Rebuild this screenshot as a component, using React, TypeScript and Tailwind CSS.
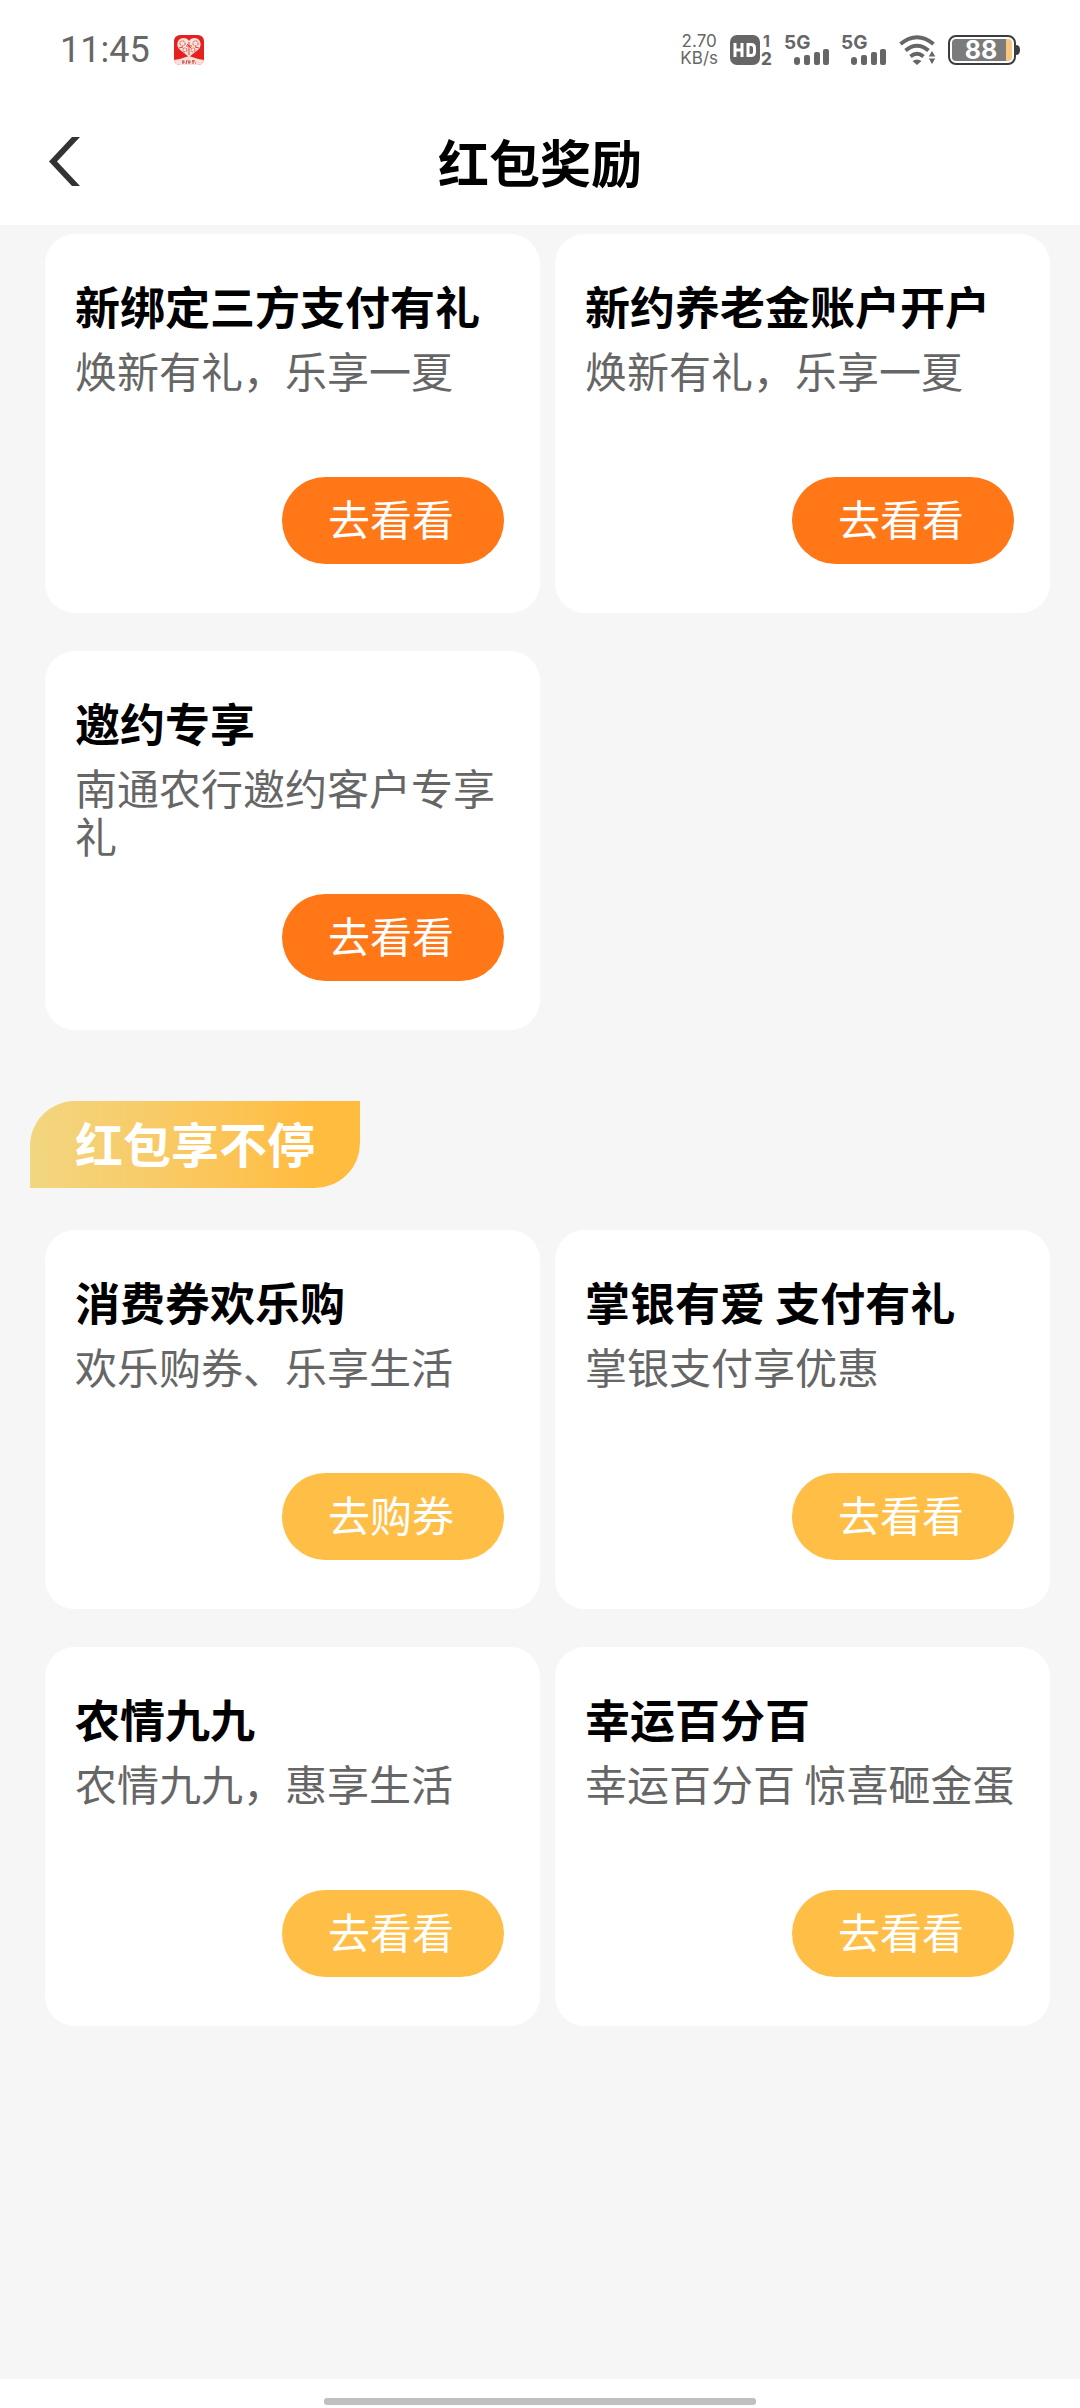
import React from "react";

type Reward = {
  title: string;
  description: string;
  action: string;
};

const newUserRewards: Reward[] = [
  { title: "新绑定三方支付有礼", description: "焕新有礼，乐享一夏", action: "去看看" },
  { title: "新约养老金账户开户", description: "焕新有礼，乐享一夏", action: "去看看" },
  { title: "邀约专享", description: "南通农行邀约客户专享礼", action: "去看看" },
];

const moreRewards: Reward[] = [
  { title: "消费券欢乐购", description: "欢乐购券、乐享生活", action: "去购券" },
  { title: "掌银有爱 支付有礼", description: "掌银支付享优惠", action: "去看看" },
  { title: "农情九九", description: "农情九九，惠享生活", action: "去看看" },
  { title: "幸运百分百", description: "幸运百分百 惊喜砸金蛋", action: "去看看" },
];

const AppBadge = () => (
  <svg width="30" height="30" viewBox="0 0 30 30" aria-hidden="true">
    <defs>
      <clipPath id="badge">
        <rect width="30" height="30" rx="6" />
      </clipPath>
    </defs>
    <g clipPath="url(#badge)">
      <rect width="30" height="30" fill="#e5211f" />
      <path d="M0 25 Q7 24 15 21 Q23 24 30 25 V30 H0 Z" fill="#f9dfd8" />
      <path
        d="M15 22 L5 14 C2 10 3 4 9 3 C12 3 14 4 15 6 C16 4 18 3 21 3 C27 4 28 10 25 14 Z"
        fill="#fbe3dc"
      />
      <g fill="none" stroke="#d8423a" strokeWidth="1">
        <circle cx="8.500" cy="8.500" r="2.600" strokeDasharray="2 1" />
        <circle cx="21.500" cy="8.500" r="2.600" strokeDasharray="2 1" />
        <circle cx="11" cy="15" r="2" strokeDasharray="2 1" />
        <circle cx="19" cy="15" r="2" strokeDasharray="2 1" />
        <path d="M15 7 V20 M12 11 H18 M13 9 L17 13 M5 13 L9 12 M25 13 L21 12" />
      </g>
      <path
        d="M9 25 V29 M8 27 H11 M13 25 L12 29 M15 25 V29 M14 27 H17 M19 25 V29 M18 26 H21 M21 28 H22"
        stroke="#c9463c"
        strokeWidth="1"
        fill="none"
      />
    </g>
  </svg>
);

const HdIcon = () => (
  <svg width="43" height="30" viewBox="0 0 43 30" className="overflow-visible" aria-label="HD">
    <rect width="30" height="30" rx="7" fill="#666" />
    <path
      d="M5 8 V22 M12 8 V22 M5 15 H12 M18 9.500 H21 Q24.500 9.500 24.500 13 V17 Q24.500 20.500 21 20.500 H18 Z"
      fill="none"
      stroke="#fff"
      strokeWidth="3"
    />
    <text x="33" y="12" fontSize="16" fontWeight="700" fill="#666">
      1
    </text>
    <text x="31" y="30" fontSize="17" fontWeight="800" fill="#666">
      2
    </text>
  </svg>
);

const SignalIcon = () => (
  <svg width="45" height="30" viewBox="0 0 45 30" className="overflow-visible" aria-label="5G">
    <text x="-1" y="14" fontSize="19" fontWeight="700" fill="#666">
      5G
    </text>
    <g fill="#666">
      <rect x="9" y="22" width="6" height="8" rx="3" />
      <rect x="19" y="20" width="6" height="10" rx="2" />
      <rect x="29" y="17" width="6" height="13" rx="2" />
      <rect x="38" y="14" width="6" height="16" rx="2" />
    </g>
  </svg>
);

const WifiIcon = () => (
  <svg width="37" height="30" viewBox="0 0 37 30" aria-hidden="true">
    <g fill="none" stroke="#666" strokeWidth="4">
      <path d="M1.500 9 Q18 -4.500 34.500 9" />
      <path d="M6.500 15.500 Q18 6 29.500 15.500" />
      <path d="M11.500 21.500 Q18 16 24.500 21.500" />
    </g>
    <path d="M13.500 26 Q18 23 22.500 26 L18 30 Z" fill="#666" />
    <path d="M33 15 L37 22 H29 Z M29 23 H37 L33 30 Z" fill="#666" stroke="#fff" strokeWidth="1" />
  </svg>
);

const BatteryIcon = () => (
  <svg width="72" height="30" viewBox="0 0 72 30" className="overflow-visible" aria-label="88%">
    <path d="M68 10 Q72 10 72 15 Q72 20 68 20 Z" fill="#3d3d40" />
    <rect x="1" y="1" width="66" height="28" rx="7" fill="#fff" stroke="#3d3d40" strokeWidth="2" />
    <path d="M8 4 H58 V26 H8 Q4 26 4 22 V8 Q4 4 8 4 Z" fill="#7b7b7b" />
    <path d="M58 4 H60 Q64 4 64 8 V22 Q64 26 60 26 H58 Z" fill="#f8c583" />
    <text x="33" y="24" fontSize="25" fontWeight="700" fill="#fff" textAnchor="middle">
      88
    </text>
  </svg>
);

const StatusBar = () => (
  <div className="flex h-[99px] items-center justify-between px-15 font-['Inter',sans-serif] text-[#666]">
    <div className="flex items-center gap-6">
      <span className="font-['Roboto',sans-serif] text-[36px]">11:45</span>
      <AppBadge />
    </div>
    <div className="flex items-center gap-3">
      <div className="flex flex-col text-center text-[17px] leading-[17px]">
        <span>2.70</span>
        <span>KB/s</span>
      </div>
      <HdIcon />
      <SignalIcon />
      <SignalIcon />
      <WifiIcon />
      <BatteryIcon />
    </div>
  </div>
);

const NavBar = () => (
  <div className="grid h-[126px] grid-cols-[1fr_auto_1fr] items-center px-12 pb-[2px]">
    <button type="button" aria-label="返回" className="w-8">
      <svg width="32" height="49" viewBox="0 0 32 49">
        <path d="M1 24.500 L24 0 H32 L9 24.500 L32 49 H24 Z" fill="#333" />
      </svg>
    </button>
    <h1 className="text-[51px] leading-[60px] font-bold text-black">红包奖励</h1>
  </div>
);

const RewardCard = ({ reward, buttonColor }: { reward: Reward; buttonColor: string }) => (
  <article className="flex min-h-[379px] flex-col rounded-[30px] bg-white px-[30px] pt-[46px] pb-[49px]">
    <h3 className="text-[45px] leading-[52px] font-bold text-black">{reward.title}</h3>
    <p className="mt-[14px] text-[42px] leading-[48px] text-[#666]">{reward.description}</p>
    <button
      type="button"
      className={`mt-auto mr-[6px] h-[87px] w-[222px] self-end rounded-full pr-1 pb-[6px] text-[42px] leading-[48px] text-white ${buttonColor}`}
    >
      {reward.action}
    </button>
  </article>
);

const RewardGrid = ({ rewards, buttonColor }: { rewards: Reward[]; buttonColor: string }) => (
  <div className="grid grid-cols-2 gap-x-[15px] gap-y-[38px]">
    {rewards.map((reward) => (
      <RewardCard key={reward.title} reward={reward} buttonColor={buttonColor} />
    ))}
  </div>
);

const App = () => {
  return (
    <div className="flex min-h-screen flex-col bg-[#f6f6f6] font-['Noto_Sans_CJK_SC',sans-serif]">
      <header className="bg-white">
        <StatusBar />
        <NavBar />
      </header>

      <main className="flex-1 pt-[9px] pr-[30px] pl-[45px]">
        <RewardGrid rewards={newUserRewards} buttonColor="bg-[#ff7717]" />

        <section className="mt-[71px]">
          <h2 className="-ml-[15px] mb-[42px] flex h-[87px] w-[330px] items-center justify-center rounded-tl-[45px] rounded-br-[45px] bg-linear-to-r from-[#f2d680] to-[#ffbc3f] to-85% pb-[6px] text-[48px] leading-[60px] font-bold text-white">
            红包享不停
          </h2>
          <RewardGrid rewards={moreRewards} buttonColor="bg-[#ffbe45]" />
        </section>
      </main>

      <footer className="flex h-[29px] items-end justify-center bg-white pb-[3px]">
        <div className="h-[7px] w-2/5 rounded-[3px] bg-[#c0c0c0]" />
      </footer>
    </div>
  );
};

export default App;
